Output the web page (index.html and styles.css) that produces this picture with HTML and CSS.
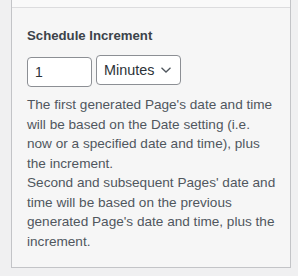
FILE: index.html
```html
<!DOCTYPE html>
<html>
<head>
<meta charset="utf-8">
<link rel="stylesheet" href="styles.css">
</head>
<body>
<div class="panel">
  <div class="top-strip"></div>
  <div class="section">
    <h3 class="heading">Schedule Increment</h3>
    <div class="controls">
      <input class="num" type="text" value="1">
      <div class="select">
        <span>Minutes</span>
        <svg width="12" height="8" viewBox="0 0 12 8"><path d="M1.5 1.8 L6 6 L10.5 1.8" fill="none" stroke="#50575e" stroke-width="1.3"/></svg>
      </div>
    </div>
    <p class="desc">The first generated Page's date and time will be based on the Date setting (i.e. now or a specified date and time), plus the increment.<br>Second and subsequent Pages' date and time will be based on the previous generated Page's date and time, plus the increment.</p>
  </div>
</div>
</body>
</html>
```
FILE: styles.css
```css
html, body {
  margin: 0;
  padding: 0;
  background: #f0f0f1;
  font-family: "Liberation Sans", Arial, sans-serif;
}
.panel {
  margin: 0 7px 0 11px;
  width: 278px;
  border: 1px solid #c3c4c7;
  border-top: none;
  background: #f6f6f6;
}
.top-strip {
  height: 7px;
  background: #f9f9f9;
  border-bottom: 1px solid #dcdcde;
}
.section {
  padding: 20px 13px 16px 15px;
}
.heading {
  margin: 0;
  font-size: 13.2px;
  font-weight: 600;
  color: #3c434a;
  line-height: 16px;
}
.controls {
  display: flex;
  align-items: flex-start;
  margin-top: 11px;
  gap: 4px;
}
.num {
  box-sizing: border-box;
  width: 65px;
  height: 30px;
  margin-top: 2px;
  border: 1px solid #8c8f94;
  border-radius: 4px;
  background: #fff;
  padding: 0 7px;
  font: 14px "Liberation Sans", Arial, sans-serif;
  color: #2c3338;
}
.select {
  box-sizing: border-box;
  height: 30px;
  width: 85px;
  border: 1px solid #8c8f94;
  border-radius: 4px;
  background: #fff;
  display: flex;
  align-items: center;
  gap: 6px;
  padding: 0 7px;
  font-size: 14.4px;
  color: #2c3338;
}
.desc {
  margin: 8px 0 0 0;
  font-size: 13.6px;
  line-height: 19.5px;
  color: #50575e;
}
```
